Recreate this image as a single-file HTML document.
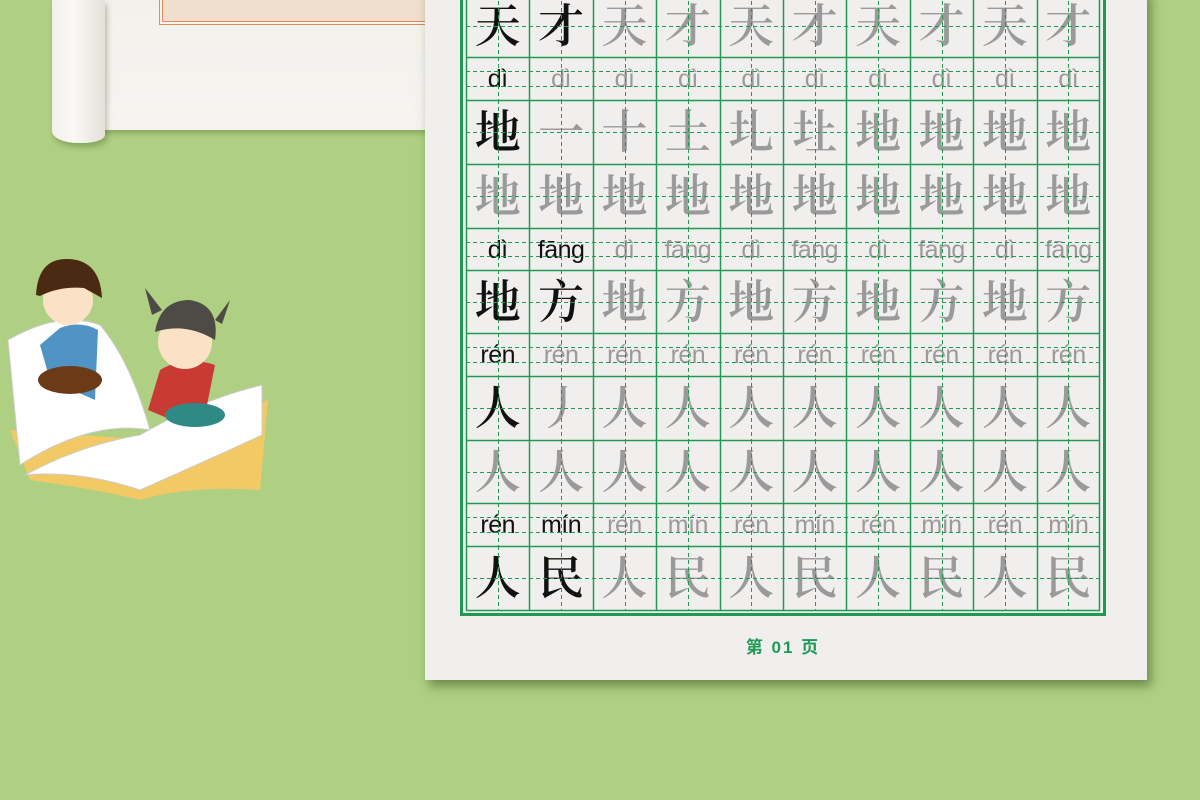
<!DOCTYPE html>
<html><head><meta charset="utf-8"><style>
body{margin:0;width:1200px;height:800px;overflow:hidden;background:#afd083;position:relative;font-family:"Liberation Sans","Noto Sans CJK SC",sans-serif}
.abs{position:absolute}
.hz{position:absolute;font-family:"Noto Serif CJK SC",serif;font-weight:600;font-size:46px;line-height:63px;text-align:center;color:#9a9a9a}
.py{position:absolute;font-family:"Liberation Sans",sans-serif;font-size:25px;text-align:center;color:#9a9a9a;letter-spacing:-0.5px}
.k{color:#111}
</style></head><body>
<!-- scroll -->
<div class="abs" style="left:100px;top:0;width:330px;height:130px;background:linear-gradient(#f3f1ec,#f6f4f0);box-shadow:0 3px 6px rgba(60,90,30,.35)"></div>
<div class="abs" style="left:162px;top:0;width:268px;height:21px;background:#efdfcc;border:1px solid #e08a5e;border-top:none;box-shadow:0 0 0 2px #f6f4f0,0 0 0 3px #e08a5e"></div>
<div class="abs" style="left:52px;top:0;width:53px;height:143px;background:linear-gradient(90deg,#f2f0ea,#faf9f6 40%,#e4e1da);border-radius:0 0 22px 26px/0 0 8px 12px;box-shadow:2px 4px 6px rgba(60,90,30,.35)"></div>
<!-- kids -->
<svg class="abs" style="left:0;top:250px" width="280" height="260" viewBox="0 0 280 260">
<path d="M10 180 L30 230 Q100 240 140 250 Q190 235 260 240 L268 150 L150 190 Z" fill="#f2c965"/>
<path d="M8 90 Q60 60 100 75 Q130 110 150 180 Q90 170 20 215 Z" fill="#fff" stroke="#ccc"/>
<path d="M140 185 Q200 150 262 135 L262 185 Q230 200 140 240 Q80 220 25 225 Q80 195 140 185 Z" fill="#fff" stroke="#ccc"/>
<path d="M40 95 L50 130 L95 150 L98 80 Q80 70 60 78 Z" fill="#4f94c4"/>
<ellipse cx="70" cy="130" rx="32" ry="14" fill="#6b3b18"/>
<circle cx="68" cy="50" r="25" fill="#fbe2c7"/>
<path d="M36 45 Q38 8 68 9 Q100 10 102 48 L84 38 Q60 36 40 46 Z" fill="#4a2a12"/>
<path d="M160 120 L148 160 L172 170 L205 165 L215 115 Q185 105 160 120 Z" fill="#c83a33"/>
<ellipse cx="195" cy="165" rx="30" ry="12" fill="#2f8a86"/>
<circle cx="185" cy="92" r="27" fill="#fbe2c7"/>
<path d="M155 82 Q160 50 190 50 Q220 55 215 90 Q185 72 155 82 Z" fill="#4e4a45"/>
<path d="M145 38 L162 60 L152 65 Z M230 50 L215 70 L222 74 Z" fill="#4e4a45"/>
</svg>
<!-- paper -->
<div class="abs" style="left:425px;top:-10px;width:722px;height:690px;background:#f1efed;box-shadow:4px 6px 10px rgba(40,70,20,.5)"></div>
<div class="abs" style="left:460px;top:-10px;width:640px;height:623px;border:3px solid #1f9a55;border-top:none"></div>
<div id="t"></div>
<svg class="abs" style="left:0;top:0" width="1200" height="800" id="g"></svg>
<div class="abs" style="left:700px;top:633px;width:166px;text-align:center;color:#1f9a55;font-size:17px;font-weight:bold;font-family:'Liberation Sans','Noto Sans CJK SC',sans-serif;letter-spacing:2px">第 01 页</div>
<script>
var rows=[[-6,57,'h'],[57,100,'p'],[100,164,'h'],[164,228,'h'],[228,270,'p'],[270,333,'h'],[333,376,'p'],[376,440,'h'],[440,503,'h'],[503,546,'p'],[546,610,'h']];
var x0=466,cw=63.4,s='',c='#1f9a55';
function R(v){return Math.round(v)+0.5;}
s+='<line x1="466.5" x2="466.5" y1="0" y2="610" stroke="'+c+'" stroke-width="1.5"/>';
s+='<line x1="1099.5" x2="1099.5" y1="0" y2="610" stroke="'+c+'" stroke-width="1.5"/>';
rows.forEach(function(r){var a=r[0],b=r[1];
 s+='<line x1="'+x0+'" x2="1100" y1="'+R(b)+'" y2="'+R(b)+'" stroke="'+c+'" stroke-width="1.5"/>';
 if(r[2]=='h'){var m=R((a+b)/2);s+='<line x1="'+x0+'" x2="1100" y1="'+m+'" y2="'+m+'" stroke="'+c+'" stroke-dasharray="4 3"/>';}
 else{var h=(b-a)/3;[a+h,a+2*h].forEach(function(y){s+='<line x1="'+x0+'" x2="1100" y1="'+R(y)+'" y2="'+R(y)+'" stroke="'+c+'" stroke-dasharray="4 3"/>';});}
 for(var i=0;i<10;i++){var cx=R(x0+cw*i+cw/2);s+='<line x1="'+cx+'" x2="'+cx+'" y1="'+a+'" y2="'+b+'" stroke="'+c+'" stroke-dasharray="4 3"/>';if(i>0){var vx=R(x0+cw*i);s+='<line x1="'+vx+'" x2="'+vx+'" y1="'+a+'" y2="'+b+'" stroke="'+c+'" stroke-width="1.5"/>';}}
});
document.getElementById('g').innerHTML=s;
var data=[
'天才天才天才天才天才',
['dì','dì','dì','dì','dì','dì','dì','dì','dì','dì'],
'地一十土圠圵地地地地',
'地地地地地地地地地地',
['dì','fāng','dì','fāng','dì','fāng','dì','fāng','dì','fāng'],
'地方地方地方地方地方',
['rén','rén','rén','rén','rén','rén','rén','rén','rén','rén'],
'人丿人人人人人人人人',
'人人人人人人人人人人',
['rén','mín','rén','mín','rén','mín','rén','mín','rén','mín'],
'人民人民人民人民人民'];
var blk=[2,1,1,0,2,2,1,1,0,2,2];
var o='';
data.forEach(function(d,ri){var r=rows[ri];var items=typeof d=='string'?d.split(''):d;
 items.forEach(function(t,i){var x=x0+cw*i;var k=i<blk[ri]?' k':'';
  if(r[2]=='h')o+='<div class="hz'+k+'" style="left:'+x+'px;top:'+(r[0]-2)+'px;width:'+cw+'px">'+t+'</div>';
  else o+='<div class="py'+k+'" style="left:'+x+'px;top:'+(r[0]+4)+'px;width:'+cw+'px;line-height:36px">'+t+'</div>';});});
document.getElementById('t').innerHTML=o;
</script>
</body></html>
